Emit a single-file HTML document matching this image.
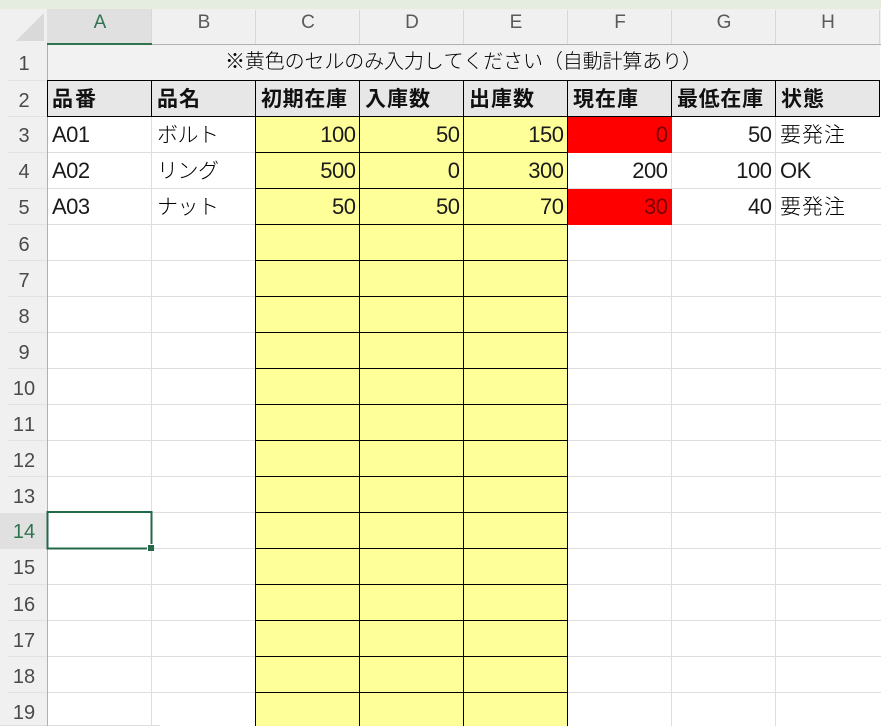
<!DOCTYPE html>
<html lang="ja"><head><meta charset="utf-8"><title>在庫管理</title>
<style>
html,body{margin:0;padding:0;background:#fff;width:881px;height:726px;overflow:hidden}
svg{display:block}
text{font-family:"Liberation Sans","Noto Sans CJK JP",sans-serif;font-size:22px;letter-spacing:-.5px;fill:#1a1a1a;text-spacing-trim:space-all;font-kerning:none}
.j{font-family:"Noto Sans CJK JP","Liberation Sans",sans-serif;font-size:21px;letter-spacing:0;font-weight:300;fill:#000}
.t{font-size:20px}
.b{font-family:"Noto Sans CJK JP","Liberation Sans",sans-serif;font-size:21px;letter-spacing:0;font-weight:700;fill:#111}
.h{font-size:19px;letter-spacing:0;fill:#5a5a5a;text-anchor:middle}
.r{font-size:20px;letter-spacing:0;fill:#4a4a4a;text-anchor:middle}
.n{text-anchor:end;transform:translateX(-.5px)}
</style></head><body>
<svg width="881" height="726" viewBox="0 0 881 726" xmlns="http://www.w3.org/2000/svg">
<rect width="881" height="726" fill="#fff"/>
<rect width="881" height="9" fill="#e4eddf"/>
<rect x="0" y="9" width="881" height="36" fill="#f0f0f0"/>
<rect x="0" y="45" width="47" height="681" fill="#f0f0f0"/>
<polygon points="44,13 44,41 16,41" fill="#d9d9d9"/>
<rect x="47" y="9" width="105" height="35" fill="#e0e0e0"/>
<rect x="0" y="513" width="47" height="36" fill="#e0e0e0"/>
<rect x="48" y="45" width="832" height="35" fill="#f2f2f2"/>
<rect x="48" y="81" width="832" height="35" fill="#e7e7e7"/>
<rect x="256" y="117" width="311" height="609" fill="#ffff99"/>

<g fill="#dedede">
<rect x="151" y="117" width="1" height="609"/>
<rect x="671" y="117" width="1" height="609"/>
<rect x="775" y="117" width="1" height="609"/>
<rect x="48" y="152" width="207" height="1"/><rect x="48" y="188" width="207" height="1"/><rect x="48" y="224" width="207" height="1"/>
<rect x="48" y="260" width="207" height="1"/><rect x="48" y="296" width="207" height="1"/><rect x="48" y="332" width="207" height="1"/>
<rect x="48" y="368" width="207" height="1"/><rect x="48" y="404" width="207" height="1"/><rect x="48" y="440" width="207" height="1"/>
<rect x="48" y="476" width="207" height="1"/><rect x="48" y="512" width="207" height="1"/><rect x="48" y="548" width="207" height="1"/>
<rect x="48" y="584" width="207" height="1"/><rect x="48" y="620" width="207" height="1"/><rect x="48" y="656" width="207" height="1"/>
<rect x="48" y="692" width="207" height="1"/>
<rect x="568" y="152" width="313" height="1"/><rect x="568" y="188" width="313" height="1"/><rect x="568" y="224" width="313" height="1"/>
<rect x="568" y="260" width="313" height="1"/><rect x="568" y="296" width="313" height="1"/><rect x="568" y="332" width="313" height="1"/>
<rect x="568" y="368" width="313" height="1"/><rect x="568" y="404" width="313" height="1"/><rect x="568" y="440" width="313" height="1"/>
<rect x="568" y="476" width="313" height="1"/><rect x="568" y="512" width="313" height="1"/><rect x="568" y="548" width="313" height="1"/>
<rect x="568" y="584" width="313" height="1"/><rect x="568" y="620" width="313" height="1"/><rect x="568" y="656" width="313" height="1"/>
<rect x="568" y="692" width="313" height="1"/>
<rect x="0" y="725" width="160" height="1"/>
</g>
<rect x="568" y="117" width="104" height="36" fill="#ff0000"/>
<rect x="568" y="189" width="104" height="36" fill="#ff0000"/>

<g fill="#d8d8d8">
<rect x="151" y="10" width="1" height="34"/><rect x="255" y="10" width="1" height="34"/><rect x="359" y="10" width="1" height="34"/>
<rect x="463" y="10" width="1" height="34"/><rect x="567" y="10" width="1" height="34"/><rect x="671" y="10" width="1" height="34"/>
<rect x="775" y="10" width="1" height="34"/><rect x="879" y="10" width="1" height="34"/>
</g>
<g fill="#e2e2e2">
<rect x="8" y="80" width="39" height="1"/><rect x="8" y="116" width="39" height="1"/><rect x="8" y="152" width="39" height="1"/>
<rect x="8" y="188" width="39" height="1"/><rect x="8" y="224" width="39" height="1"/><rect x="8" y="260" width="39" height="1"/>
<rect x="8" y="296" width="39" height="1"/><rect x="8" y="332" width="39" height="1"/><rect x="8" y="368" width="39" height="1"/>
<rect x="8" y="404" width="39" height="1"/><rect x="8" y="440" width="39" height="1"/><rect x="8" y="476" width="39" height="1"/>
<rect x="8" y="584" width="39" height="1"/><rect x="8" y="620" width="39" height="1"/><rect x="8" y="656" width="39" height="1"/>
<rect x="8" y="692" width="39" height="1"/>
</g>
<rect x="47" y="44" width="834" height="1" fill="#b0b0b0"/>
<rect x="47" y="45" width="1" height="681" fill="#b0b0b0"/>
<rect x="47" y="43" width="105" height="2" fill="#2f7350"/>

<g fill="#000">
<rect x="47" y="80" width="833" height="1"/>
<rect x="47" y="116" width="833" height="1"/>
<rect x="47" y="80" width="1" height="37"/>
<rect x="151" y="80" width="1" height="37"/>
<rect x="879" y="80" width="1" height="37"/>
<rect x="671" y="80" width="1" height="37"/>
<rect x="775" y="80" width="1" height="37"/>
<rect x="255" y="80" width="1" height="646"/>
<rect x="359" y="80" width="1" height="646"/>
<rect x="463" y="80" width="1" height="646"/>
<rect x="567" y="80" width="1" height="646"/>
<rect x="255" y="152" width="313" height="1"/><rect x="255" y="188" width="313" height="1"/><rect x="255" y="224" width="313" height="1"/>
<rect x="255" y="260" width="313" height="1"/><rect x="255" y="296" width="313" height="1"/><rect x="255" y="332" width="313" height="1"/>
<rect x="255" y="368" width="313" height="1"/><rect x="255" y="404" width="313" height="1"/><rect x="255" y="440" width="313" height="1"/>
<rect x="255" y="476" width="313" height="1"/><rect x="255" y="512" width="313" height="1"/><rect x="255" y="548" width="313" height="1"/>
<rect x="255" y="584" width="313" height="1"/><rect x="255" y="620" width="313" height="1"/><rect x="255" y="656" width="313" height="1"/>
<rect x="255" y="692" width="313" height="1"/>
</g>

<rect x="47.5" y="512" width="104" height="36.5" fill="none" stroke="#24684a" stroke-width="2"/>
<rect x="147" y="544" width="7" height="7" fill="#fff"/>
<rect x="148" y="545" width="6" height="6" fill="#24684a"/>

<text class="h" x="100" y="28" style="fill:#2f7350">A</text>
<text class="h" x="204" y="28">B</text>
<text class="h" x="308" y="28">C</text>
<text class="h" x="412" y="28">D</text>
<text class="h" x="516" y="28">E</text>
<text class="h" x="620" y="28">F</text>
<text class="h" x="724" y="28">G</text>
<text class="h" x="828" y="28">H</text>

<text class="r" x="24" y="70">1</text>
<text class="r" x="24" y="107">2</text>
<text class="r" x="24" y="142">3</text>
<text class="r" x="24" y="178">4</text>
<text class="r" x="24" y="214">5</text>
<text class="r" x="24" y="251">6</text>
<text class="r" x="24" y="287">7</text>
<text class="r" x="24" y="323">8</text>
<text class="r" x="24" y="359">9</text>
<text class="r" x="24" y="395">10</text>
<text class="r" x="24" y="431">11</text>
<text class="r" x="24" y="467">12</text>
<text class="r" x="24" y="503">13</text>
<text class="r" x="24" y="538" style="fill:#2f7350">14</text>
<text class="r" x="24" y="574">15</text>
<text class="r" x="24" y="611">16</text>
<text class="r" x="24" y="647">17</text>
<text class="r" x="24" y="683">18</text>
<text class="r" x="24" y="719">19</text>

<text class="j t" x="225" y="68" textLength="477" lengthAdjust="spacing">※黄色のセルのみ入力してください（自動計算あり）</text>

<text class="b" x="52" y="106" textLength="44">品番</text>
<text class="b" x="157" y="106" textLength="43">品名</text>
<text class="b" x="261" y="106" textLength="86">初期在庫</text>
<text class="b" x="365" y="106" textLength="65">入庫数</text>
<text class="b" x="469" y="106" textLength="65">出庫数</text>
<text class="b" x="573" y="106" textLength="65">現在庫</text>
<text class="b" x="677" y="106" textLength="86">最低在庫</text>
<text class="b" x="781" y="106" textLength="43">状態</text>

<text x="52" y="142">A01</text>
<text x="52" y="178">A02</text>
<text x="52" y="214">A03</text>
<text class="j" x="157" y="142" textLength="62">ボルト</text>
<text class="j" x="157" y="178" textLength="62">リング</text>
<text class="j" x="157" y="214" textLength="62">ナット</text>

<text class="n" x="356" y="142">100</text><text class="n" x="460" y="142">50</text><text class="n" x="564" y="142">150</text>
<text class="n" x="356" y="178">500</text><text class="n" x="460" y="178">0</text><text class="n" x="564" y="178">300</text>
<text class="n" x="356" y="214">50</text><text class="n" x="460" y="214">50</text><text class="n" x="564" y="214">70</text>
<text class="n" x="668" y="142" style="fill:#700">0</text><text class="n" x="668" y="178">200</text><text class="n" x="668" y="214" style="fill:#700">30</text>
<text class="n" x="772" y="142">50</text><text class="n" x="772" y="178">100</text><text class="n" x="772" y="214">40</text>
<text class="j" x="780" y="142" textLength="65">要発注</text>
<text x="780" y="178">OK</text>
<text class="j" x="780" y="214" textLength="65">要発注</text>
</svg>
</body></html>
